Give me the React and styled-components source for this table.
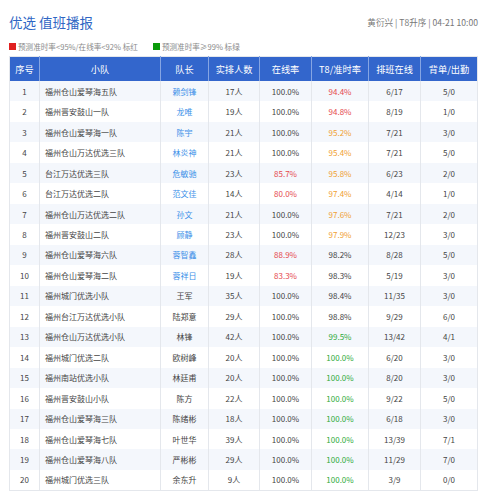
import React from "react";
import styled, { createGlobalStyle } from "styled-components";

const Global = createGlobalStyle`
  html, body { margin: 0; padding: 0; background: #fff; }
  body { font-family: "Noto Sans CJK SC", "Noto Sans", sans-serif; }
`;

const Page = styled.div`
  width: 487px;
  padding: 0 9px;
  box-sizing: border-box;
`;

const TopBar = styled.div`
  display: flex;
  justify-content: space-between;
  align-items: center;
  height: 36px;
  padding-top: 7px;
  box-sizing: border-box;
`;

const Title = styled.h1`
  margin: 0;
  font-size: 13.5px;
  font-weight: 400;
  color: #2f66c4;
  letter-spacing: 0;
`;

const Meta = styled.div`
  font-size: 8.6px;
  color: #777;
`;

const Legend = styled.div`
  display: flex;
  align-items: center;
  gap: 15px;
  height: 20px;
  font-size: 7.6px;
  color: #8a8a8a;
`;

const LegendItem = styled.div`
  display: flex;
  align-items: center;
  gap: 2px;
`;

const Swatch = styled.span`
  display: inline-block;
  width: 7px;
  height: 7px;
  background: ${(p) => p.$color};
`;

const Table = styled.table`
  width: 100%;
  border-collapse: collapse;
  table-layout: fixed;
  font-size: 8px;
  color: #444;
  border: 1px solid #e4e7ec;
`;

const HeadRow = styled.tr`
  height: 24.5px;
  background: #3366cc;
`;

const Th = styled.th`
  font-weight: 400;
  font-size: 9.2px;
  color: #fff;
  text-align: center;
  padding: 0;
  border-left: 1px solid #86a5e3;
  &:first-child { border-left: none; }
`;

const Row = styled.tr`
  height: 20.47px;
  background: ${(p) => (p.$shade ? "#f4f7fc" : "#fff")};
`;

const Td = styled.td`
  padding: 0 ${(p) => (p.$left ? "5px" : "0")};
  text-align: ${(p) => (p.$left ? "left" : "center")};
  color: ${(p) => p.$color || "#444"};
  border-left: 1px solid #e4e7ec;
  white-space: nowrap;
  &:first-child { border-left: none; }
`;

const RED = "#e5484d";
const ORANGE = "#f0a030";
const GREEN = "#2eaa3a";
const BLUE = "#3b8fe8";

const rows = [
  [1, "福州仓山爱琴海五队", "赖剑锋", "17人", "100.0%", "94.4%", "6/17", "5/0"],
  [2, "福州晋安鼓山一队", "龙唯", "19人", "100.0%", "94.8%", "8/19", "1/0"],
  [3, "福州仓山爱琴海一队", "陈宇", "21人", "100.0%", "95.2%", "7/21", "3/0"],
  [4, "福州仓山万达优选三队", "林炎神", "21人", "100.0%", "95.4%", "7/21", "5/0"],
  [5, "台江万达优选三队", "危敏驰", "23人", "85.7%", "95.8%", "6/23", "2/0"],
  [6, "台江万达优选二队", "范文佳", "14人", "80.0%", "97.4%", "4/14", "1/0"],
  [7, "福州仓山万达优选二队", "孙文", "21人", "100.0%", "97.6%", "7/21", "2/0"],
  [8, "福州晋安鼓山二队", "顾静", "23人", "100.0%", "97.9%", "12/23", "3/0"],
  [9, "福州仓山爱琴海六队", "蓉智鑫", "28人", "88.9%", "98.2%", "8/28", "5/0"],
  [10, "福州仓山爱琴海二队", "蓉祥日", "19人", "83.3%", "98.3%", "5/19", "3/0"],
  [11, "福州城门优选小队", "王军", "35人", "100.0%", "98.4%", "11/35", "3/0"],
  [12, "福州台江万达优选小队", "陆郑意", "29人", "100.0%", "98.8%", "9/29", "6/0"],
  [13, "福州仓山万达优选小队", "林锋", "42人", "100.0%", "99.5%", "13/42", "4/1"],
  [14, "福州城门优选二队", "欧树峰", "20人", "100.0%", "100.0%", "6/20", "3/0"],
  [15, "福州南站优选小队", "林廷甫", "20人", "100.0%", "100.0%", "8/20", "3/0"],
  [16, "福州晋安鼓山小队", "陈方", "22人", "100.0%", "100.0%", "9/22", "5/0"],
  [17, "福州仓山爱琴海三队", "陈绪彬", "18人", "100.0%", "100.0%", "6/18", "3/0"],
  [18, "福州仓山爱琴海七队", "叶世华", "39人", "100.0%", "100.0%", "13/39", "7/1"],
  [19, "福州仓山爱琴海八队", "严彬彬", "29人", "100.0%", "100.0%", "11/29", "7/0"],
  [20, "福州城门优选三队", "余东升", "9人", "100.0%", "100.0%", "3/9", "0/0"],
];

const onlineColor = (v) => (parseFloat(v) < 92 ? RED : undefined);
const t8Color = (v) => {
  const n = parseFloat(v);
  if (n < 95) return RED;
  if (n < 98) return ORANGE;
  if (n >= 99) return GREEN;
  return undefined;
};

const widths = [30, 121, 48, 51, 52, 57, 52, 57];
const heads = ["序号", "小队", "队长", "实排人数", "在线率", "T8/准时率", "排班在线", "背单/出勤"];

export default function App() {
  return (
    <Page>
      <Global />
      <TopBar>
        <Title>优选 值班播报</Title>
        <Meta>黄衍兴 | T8升序 | 04-21 10:00</Meta>
      </TopBar>
      <Legend>
        <LegendItem>
          <Swatch $color="#e02020" />
          预测准时率&lt;95%/在线率&lt;92% 标红
        </LegendItem>
        <LegendItem>
          <Swatch $color="#0a9a0a" />
          预测准时率≥99% 标绿
        </LegendItem>
      </Legend>
      <Table>
        <colgroup>
          {widths.map((w, i) => (
            <col key={i} style={{ width: w }} />
          ))}
        </colgroup>
        <thead>
          <HeadRow>
            {heads.map((h) => (
              <Th key={h}>{h}</Th>
            ))}
          </HeadRow>
        </thead>
        <tbody>
          {rows.map((r) => (
            <Row key={r[0]} $shade={r[0] % 2 === 1}>
              <Td>{r[0]}</Td>
              <Td $left>{r[1]}</Td>
              <Td $color={r[0] <= 10 ? BLUE : undefined}>{r[2]}</Td>
              <Td>{r[3]}</Td>
              <Td $color={onlineColor(r[4])}>{r[4]}</Td>
              <Td $color={t8Color(r[5])}>{r[5]}</Td>
              <Td>{r[6]}</Td>
              <Td>{r[7]}</Td>
            </Row>
          ))}
        </tbody>
      </Table>
    </Page>
  );
}
